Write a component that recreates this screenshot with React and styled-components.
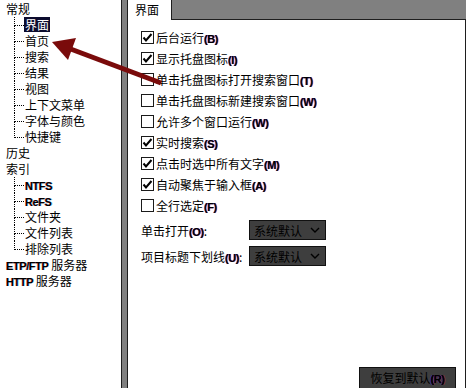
import styled, { createGlobalStyle } from 'styled-components'

const GlobalStyle = createGlobalStyle`
  body {
    margin: 0;
    background: #fff;
    color: #000;
    font-family: 'Noto Sans CJK SC', 'Noto Sans', sans-serif;
    font-size: 12px;
  }
`

const tree = [
  {
    label: '常规',
    children: [
      { text: '界面', selected: true },
      { text: '首页' },
      { text: '搜索' },
      { text: '结果' },
      { text: '视图' },
      { text: '上下文菜单' },
      { text: '字体与颜色' },
      { text: '快捷键' },
    ],
  },
  { label: '历史' },
  {
    label: '索引',
    children: [
      { latin: 'NTFS' },
      { latin: 'ReFS' },
      { text: '文件夹' },
      { text: '文件列表' },
      { text: '排除列表' },
    ],
  },
  { latin: 'ETP/FTP', label: ' 服务器' },
  { latin: 'HTTP', label: ' 服务器' },
]

const options = [
  { label: '后台运行', key: 'B', checked: true },
  { label: '显示托盘图标', key: 'I', checked: true },
  { label: '单击托盘图标打开搜索窗口', key: 'T' },
  { label: '单击托盘图标新建搜索窗口', key: 'W' },
  { label: '允许多个窗口运行', key: 'W' },
  { label: '实时搜索', key: 'S', checked: true },
  { label: '点击时选中所有文字', key: 'M', checked: true },
  { label: '自动聚焦于输入框', key: 'A', checked: true },
  { label: '全行选定', key: 'F' },
]

const selects = [
  { label: '单击打开', key: 'O' },
  { label: '项目标题下划线', key: 'U' },
]

const Check = ({ checked }) => (
  <CheckBox width="13" height="13" viewBox="0 0 13 13">
    <rect x="0.5" y="0.5" width="12" height="12" fill="#fff" stroke="#1a1a1a" />
    {checked && <polyline points="2.5,6.5 5,9.5 10.5,3" fill="none" stroke="#000" strokeWidth="2" />}
  </CheckBox>
)

const TreeItem = ({ item, last }) => (
  <ChildRow>
    <Connector>
      <ConnTop />
      <ConnBottom $last={last} />
    </Connector>
    <ItemLabel $selected={item.selected}>
      {item.latin ? <Latin>{item.latin}</Latin> : item.text}
    </ItemLabel>
  </ChildRow>
)

export default function App() {
  return (
    <Window>
      <GlobalStyle />
      <TreePane>
        {tree.map((g, i) => (
          <div key={i}>
            <GroupRow>
              {g.latin && <Latin>{g.latin}</Latin>}
              {g.label}
            </GroupRow>
            {g.children &&
              g.children.map((c, j) => (
                <TreeItem key={j} item={c} last={j === g.children.length - 1} />
              ))}
          </div>
        ))}
      </TreePane>
      <Gutter />
      <Main>
        <TabStrip>
          <Tab>界面</Tab>
          <TabFiller />
        </TabStrip>
        <Panel>
          {options.map((o, i) => (
            <CheckRow key={i}>
              <Check checked={o.checked} />
              <span>
                {o.label}
                <Key>({o.key})</Key>
              </span>
            </CheckRow>
          ))}
          <SelectGroup>
            {selects.map((s, i) => (
              <SelectRow key={i}>
                <SelectLabel>
                  {s.label}
                  <Key>({s.key})</Key>:
                </SelectLabel>
                <Select>
                  <span>系统默认</span>
                  <svg width="10" height="6" viewBox="0 0 10 6">
                    <polyline points="1,1 5,5 9,1" fill="none" stroke="#000" strokeWidth="1.4" />
                  </svg>
                </Select>
              </SelectRow>
            ))}
          </SelectGroup>
          <ResetButton>
            恢复到默认<Key>(R)</Key>
          </ResetButton>
        </Panel>
      </Main>
      <ArrowLayer width="466" height="388" viewBox="0 0 466 388">
        <line x1="161" y1="83" x2="68" y2="48" stroke="#7a0b0b" strokeWidth="5" />
        <polygon points="52,42 76,38 68,60" fill="#7a0b0b" />
      </ArrowLayer>
    </Window>
  )
}

const Window = styled.div`
  position: relative;
  display: flex;
  width: 466px;
  height: 388px;
  overflow: hidden;
`

const TreePane = styled.div`
  width: 121px;
  padding-top: 1px;
  border-right: 1px solid #1e1e1e;
  background: #fff;
`

const GroupRow = styled.div`
  height: 16px;
  line-height: 16px;
  padding-left: 6px;
  white-space: nowrap;
`

const ChildRow = styled.div`
  display: flex;
  height: 16px;
  padding-left: 14px;
`

const Connector = styled.div`
  display: flex;
  flex-direction: column;
  width: 10px;
`

const ConnTop = styled.div`
  box-sizing: border-box;
  height: 9px;
  border-left: 1px dotted #000;
  border-bottom: 1px dotted #000;
`

const ConnBottom = styled.div`
  flex: 1;
  border-left: 1px dotted ${p => (p.$last ? 'transparent' : '#000')};
`

const ItemLabel = styled.span`
  height: 15px;
  line-height: 15px;
  padding: 0 1px;
  white-space: nowrap;
  background: ${p => (p.$selected ? '#0c0c2e' : 'transparent')};
  color: ${p => (p.$selected ? '#fff' : '#000')};
`

const Latin = styled.span`
  font-family: 'Liberation Sans', Arial, sans-serif;
  font-weight: bold;
  font-size: 11px;
  letter-spacing: -0.4px;
  text-shadow: -0.6px 0 rgba(255, 0, 0, 0.55), 0.6px 0 rgba(0, 190, 255, 0.55);
`

const Key = styled(Latin)`
  text-shadow: -0.6px 0 rgba(0, 0, 255, 0.5), 0.6px 0 rgba(255, 0, 0, 0.45);
`

const Gutter = styled.div`
  width: 5px;
  background: #808080;
`

const Main = styled.div`
  display: flex;
  flex-direction: column;
  flex: 1;
  border-left: 1px solid #1e1e1e;
`

const TabStrip = styled.div`
  display: flex;
  height: 20px;
`

const Tab = styled.div`
  width: 44px;
  padding-left: 7px;
  box-sizing: border-box;
  line-height: 19px;
  background: #fff;
  border-right: 1px solid #1e1e1e;
`

const TabFiller = styled.div`
  flex: 1;
  background: #808080;
  border-bottom: 1px solid #1e1e1e;
`

const Panel = styled.div`
  display: flex;
  flex-direction: column;
  flex: 1;
  padding: 7px 0 0 13px;
  background: #fff;
  border-right: 1px solid #1e1e1e;
`

const CheckRow = styled.div`
  display: flex;
  align-items: center;
  gap: 1px;
  height: 21px;
  white-space: nowrap;
`

const CheckBox = styled.svg`
  flex: none;
  margin-right: 1px;
`

const SelectGroup = styled.div`
  display: flex;
  flex-direction: column;
  gap: 6px;
  margin-top: 4px;
`

const SelectRow = styled.div`
  display: flex;
  align-items: center;
  height: 20px;
`

const SelectLabel = styled.span`
  width: 108px;
  white-space: nowrap;
`

const Select = styled.div`
  display: flex;
  align-items: center;
  justify-content: space-between;
  box-sizing: border-box;
  width: 77px;
  height: 20px;
  padding: 0 5px 0 4px;
  background: #3e3e3e;
  border: 1px solid #111;
  color: #000;
`

const ResetButton = styled.div`
  align-self: flex-end;
  box-sizing: border-box;
  width: 97px;
  height: 23px;
  margin: auto 9px -2px 0;
  line-height: 20px;
  text-align: center;
  background: #3e3e3e;
  border: 1px solid #111;
  color: #000;
`

const ArrowLayer = styled.svg`
  position: absolute;
  left: 0;
  top: 0;
  pointer-events: none;
`
